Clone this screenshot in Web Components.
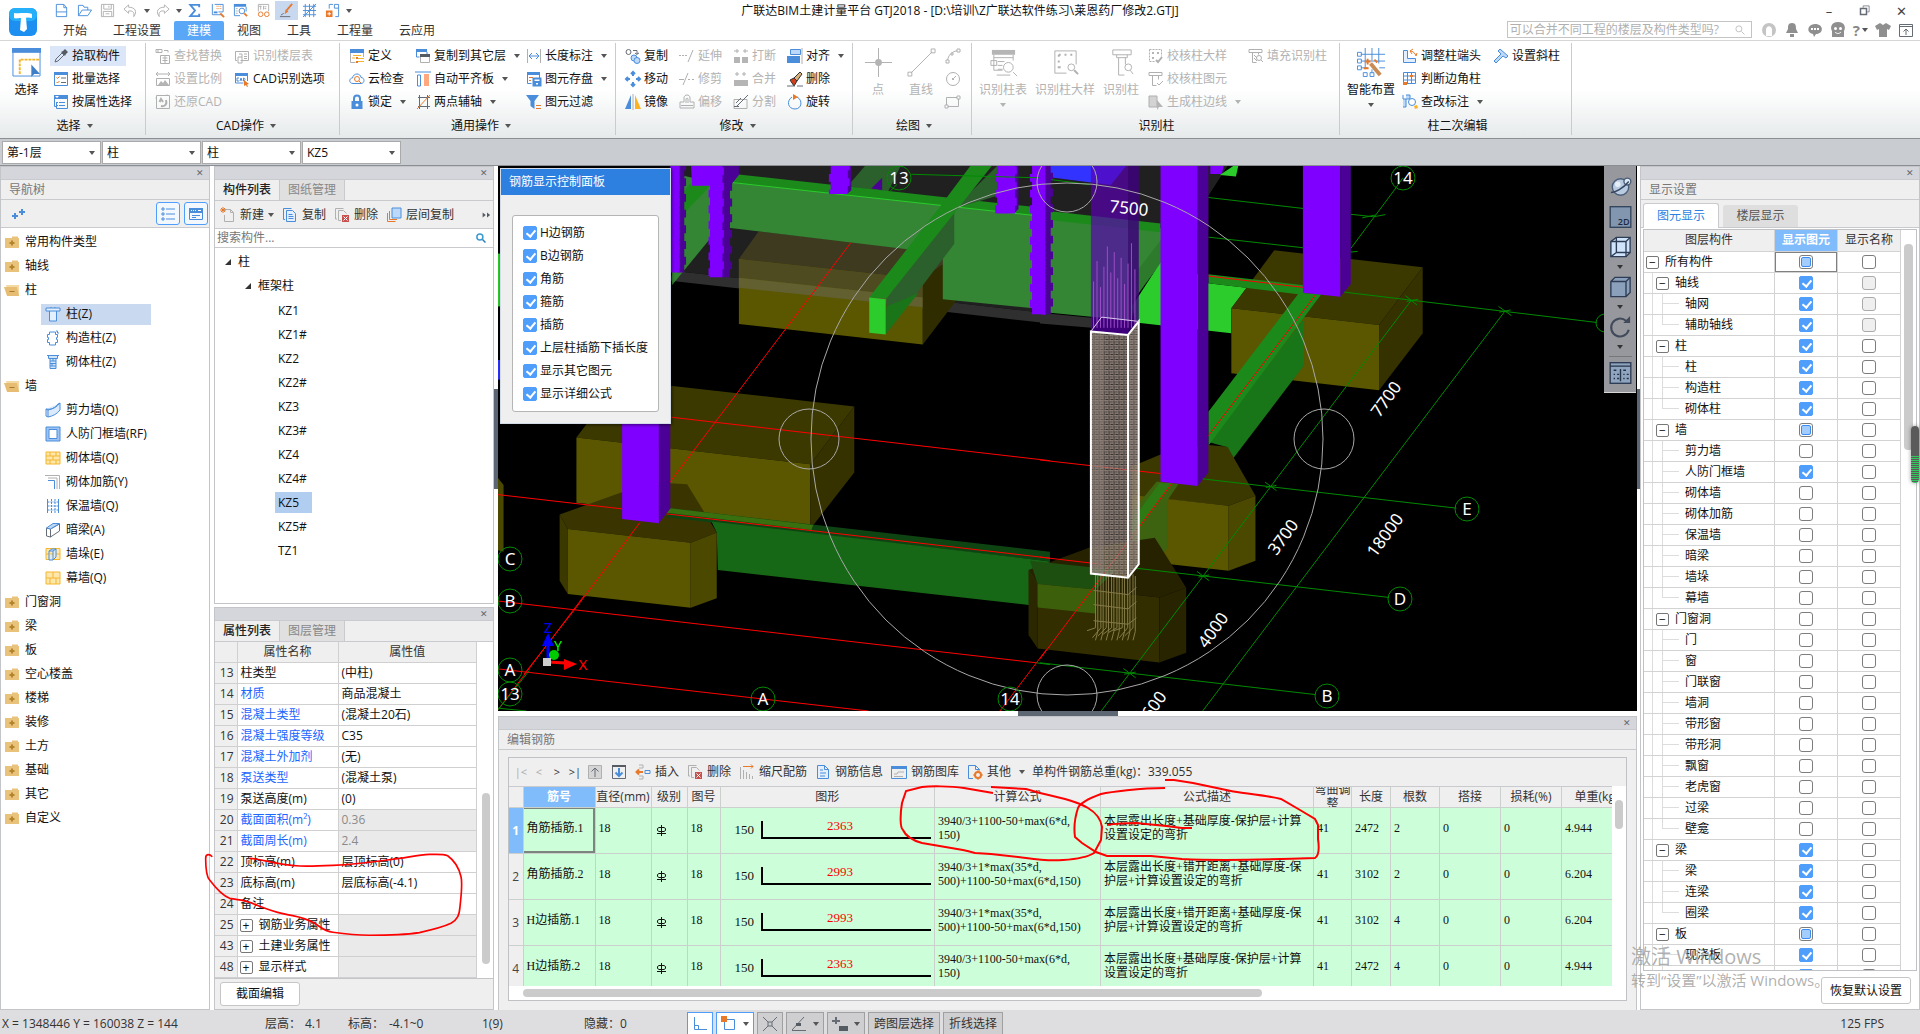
<!DOCTYPE html>
<html lang="zh-CN">
<head>
<meta charset="utf-8">
<title>广联达BIM土建计量平台 GTJ2018</title>
<style>
  html,body{height:100%}
  body{margin:0;overflow:hidden;background:#fff;color:#111;font:12px/16px "Open Sans","Noto Sans CJK SC",sans-serif}
</style>
</head>
<body>
<app-shell></app-shell>

<script>
const BASE = `
  *{box-sizing:border-box}
  button,input,select{font:inherit;color:inherit;margin:0}
  button{background:none;border:0;padding:0;white-space:nowrap}
  a{color:inherit;text-decoration:none}
  table{border-collapse:collapse;table-layout:fixed}
  th{font-weight:400}
  .caret{display:inline-block;border:3px solid transparent;border-top:4px solid #555;border-bottom:0;flex:none}
  .pm{display:inline-grid;place-items:center;width:13px;height:13px;border:1px solid #777;border-radius:2px;line-height:9px;margin-right:6px;background:#fff;vertical-align:middle}
  input[type=checkbox]{appearance:none;display:block;position:relative;width:14px;height:14px;border:1px solid #7d7d7d;border-radius:3px;background:#fff}
  input[type=checkbox]:checked{background:#4f9efb;border-color:#4f9efb;border-radius:2px}
  input[type=checkbox]:checked::after{content:"";position:absolute;left:4px;top:1px;width:4px;height:7px;border:solid #fff;border-width:0 2px 2px 0;transform:rotate(40deg)}
  input[type=checkbox]:disabled{background:#efefef;border-color:#aaa}
  input[type=checkbox]:indeterminate::after{content:"";position:absolute;inset:1px;border:1px solid #3b8df0;border-radius:2px;background:#a3cdff}
`;

class BaseElement extends HTMLElement {
  connectedCallback(){
    if(this.shadowRoot) return;
    const s = this.attachShadow({mode:'open'});
    s.innerHTML = '<style>' + BASE + this.css() + '</style>' + this.render();
    this.ready(s);
  }
  css(){ return ''; }
  render(){ return '<slot></slot>'; }
  ready(){}
}

// ---- Icons ----
// classes: b/o/g/k/y = blue/orange/grey/dark/yellow stroke, f* = filled
const ICONS = {
  file:'<path class="b" d="M2.5 1.5h8l3 3.5v9.5h-11zM10.5 1.5v3.5h3M2.5 9.5h11"/>',
  open:'<path class="b" d="M1.5 13.5v-11h5l1 2h4v3M1.5 13.5l4-6h10l-4 6z"/>',
  save:'<path class="g" d="M1.5 1.5h13v13h-13zM4 1.5v5h8v-5M3.5 14v-5h9v5M6 11.5h4M9.5 3v2"/>',
  undo:'<path class="g" d="M6 2L1 6.5 6 11V8.5c4-.5 6.5 1 5.5 6C15.5 9 13 4.5 6 4.5z"/>',
  redo:'<path class="g" d="M10 2l5 4.5-5 4.5V8.5c-4-.5-6.5 1-5.5 6C.5 9 3 4.5 10 4.5z"/>',
  sum:'<path class="b w2" d="M13 4.5V2H3.5l5 6-5 6H13v-2.500"/>',
  calcview:'<path class="b" d="M2.5 1v11.5h10M5 1.5h9v8H9"/><path class="o" d="M7 3.5h1m1 0h1m1 0h1M7 6h1m1 0h1m1 0h1"/><path class="fb" d="M4 9h4v2H4z"/><path class="o w2" d="M11 11l4 4"/>',
  calcfind:'<path class="fb" d="M1 1h13v3H1z"/><path class="b" d="M1.5 1.5v12h6M14 4v5"/><circle class="b" cx="9.5" cy="8.5" r="3"/><path class="o w2" d="M12 11l3 3"/><path class="g" d="M3 6h2M3 8.5h2M3 11h2"/>',
  glasses:'<path class="g" d="M2.5 9V1.5h11V9M5 3v4M8 3v4M11 4H9m0 2h2M3 3.5h3"/><circle class="o" cx="5" cy="12" r="2.5"/><circle class="o" cx="11.5" cy="12" r="2.5"/>',
  pen:'<path class="o w2" d="M14 1L8 8"/><path class="fo" d="M6 12l1-5 3 2z"/><path class="k" d="M1 14.5h11M2 13l3-2"/>',
  grid:'<path class="b" d="M1 3.5h14M1 8h14M1 12.5h14M3.5 1v14M8 1v14M12.5 1v14M1 15L15 1"/>',
  addpage:'<path class="b" d="M4.5 6V1.5h4M10 1.5h4.5v13H11M10 1.5v4h4"/><path class="fo" d="M1 8h7v7H1z"/><path stroke="#fff" d="M4.5 9.5v4M2.5 11.5h4"/>',
  dropper:'<path class="k" d="M2 14l1-3 6-6 2 2-6 6z"/><path class="fk" d="M8 4l2-1 2-2 3 3-2 2-1 2z"/>',
  listsel:'<path class="fb" d="M1 1h14v3H1z"/><path class="b" d="M1.5 1.5h13v13h-13z"/><path class="o" d="M3.5 6.5l1 1 2-2M3.5 11l1 1 2-2"/><path class="k" d="M8 7h5M8 11.5h5"/>',
  propsel:'<path class="fb" d="M1 1h14v4H1z"/><path class="b" d="M1.5 1.5v11h2M14.5 5v9.5h-11V8"/><path class="b" d="M6 8.5h6M6 11.5h6M4 8.5h1M4 11.5h1"/><path fill="#fff" d="M2 2h4L4 4z"/>',
  replace:'<path class="g" d="M1 1.5h6v3H1zM3 1.5v3M9 2.5h4v2M5.5 7.5h9v8h-9zM7.5 10h5M7.5 12.5h5M10 7.5v8"/>',
  floors:'<path class="g" d="M3 12.5H1.5v-9h13v9h-8"/><path class="g" d="M5 6h3v9H4V9h4M10 6h3M10 8.5h3M10 10.5h3"/>',
  scale:'<path class="g" d="M1 3h14M3 1L1 3l2 2M13 1l2 2-2 2M1.5 7.5h13v7h-13z"/><path class="fg" d="M3 14l3-4 2 2 2-3 4 5z"/>',
  cad:'<path class="fb" d="M1 2h13v3H1z"/><path class="b" d="M1.5 2.5v9.5h8M13.5 5v5"/><path class="b" d="M5 7H3v3h2M6 10l1-3 1 3M9.5 7v3c2 0 2-3 0-3"/><path class="fo" d="M10 9l5 4-2 .5 1 2-1 .5-1-2-2 1z"/>',
  restore:'<path class="g" d="M1.5 1.5h13v13h-13zM1.5 4h-1M12 1.5v-1"/><path class="g w2" d="M6 12c5 1 6-3 5-6M4.5 8l1.5-3 2 3"/>',
  define:'<path class="fb" d="M1 1h14v4H1z"/><path class="g" d="M1.5 5v9.5h5M14.5 5v4"/><path class="y" d="M4 7.5h8M3 10h3M8 10.5h7M8 13.5h7"/><path class="fo" d="M7 9h2v2H7zM7 13h2v2H7z"/>',
  cloud:'<path class="b" d="M4 12.5C-.5 12.5 0 7 3.5 7 4.5 1.5 11.5 2 12 6.5c4 0 4 6 0 6z"/><circle class="o" cx="8" cy="8" r="2.5"/><path class="o" d="M10 10l3 3"/>',
  lock:'<path class="b w2" d="M5 7V4.5c0-4 6-4 6 0V7"/><path class="fb" d="M2.5 7h11v8h-11z"/><circle cx="8" cy="11" r="1.5" fill="#fff"/>',
  copyfloor:'<path class="fb" d="M1 1h11v3H1z"/><path class="b" d="M1.5 1v8h3M12 4v2"/><path class="g" d="M5.5 7.5h9v7h-9z"/><path class="fk" d="M5 6h10v3H5z"/>',
  flatten:'<path class="b" d="M0 1h16M2.5 4v11h3V4z"/><path fill="#ffa77e" d="M9 3h5v12H9z"/>',
  twopoint:'<path class="k" d="M3 3.5h12M3 12.5h12M4.5 1v14M12.5 1v14"/><path class="o" d="M2 15L15 1"/>',
  dim:'<path class="g" d="M1.5 1v14M14.5 1v14"/><path class="b" d="M3 8h10M6 5L3 8l3 3M10 5l3 3-3 3"/>',
  saveel:'<path class="fb" d="M1 1h13v3H1z"/><path class="b" d="M1.5 1.5v11h4M13.5 3v4"/><path class="o" d="M3 6.5h4M3 9.5h2"/><path class="b w2" d="M7.5 7.5h7v7h-7zM9 14v-3h4v3"/>',
  filter:'<path class="fb" d="M0 1h13L8.5 7v8l-4-3V7z"/><path class="o" d="M10 11.5h5M10 14.5h5"/>',
  copy2:'<circle class="k" cx="3.5" cy="4" r="2.5"/><path class="k" d="M8 2.5h4v4l-2-1.5M12 6l2-1"/><circle class="b" cx="9" cy="10" r="3" fill="#bcd9fa"/><circle class="b" cx="12" cy="12.5" r="3" fill="#bcd9fa"/>',
  move:'<path class="b w2" d="M8 1v4M8 11v4M1 8h4M11 8h4M6 3l2-2 2 2M6 13l2 2 2-2M3 6L1 8l2 2M13 6l2 2-2 2"/>',
  mirror:'<path class="fb" d="M6 1v14H0z"/><path class="fy" d="M10 1v14h6z"/><path class="g" d="M8 0v16"/>',
  extend:'<path class="g" d="M0 7.5h8" stroke-dasharray="2 1"/><path class="g" d="M9 14l5-12"/>',
  trim:'<path class="g" d="M0 8.5h5M4 14L9 2M9 8.5h2m2 0h2"/>',
  offset:'<path class="g" d="M5 8V4c0-4 6-4 6 0v4h4v6H1V8zM7 9V5c0-1 2-1 2 0v4M2 11.5h12"/>',
  brk:'<path class="fg" d="M1 9h6v6H1zM9 9h6v6H9z"/><path class="g" d="M1 3h5M4 1v4M10 3h5M12 1v4"/>',
  merge:'<path class="fg" d="M1 9h14v6H1z"/><path class="g" d="M2 3h4M4 1v4M9 3h4M11 1v4"/>',
  split:'<path class="g" d="M1 5.5h13v9H1z"/><path class="k" d="M3 13L13 3l2-2M1 12.5h5M3 9l5-5"/>',
  align:'<path class="fb" d="M0 8h13v7H0z"/><path class="b" d="M3.5 1.5h10v5h-10z" fill="#bcd9fa"/><path class="g" d="M15 0v16"/>',
  erase:'<path d="M7 7l6-6 2 2-5 7z" fill="#d8b17a" stroke="#333"/><path d="M3 9l4-2 3 3-3 5z" fill="#d23e1a" stroke="#333"/><path class="k" d="M0 15h8M10 15h6"/>',
  rotate:'<path class="b" d="M5 3c-6 4-4 12 3 12s8-9 2-12"/><path class="fo" d="M6 0l5 3-5 3z"/>',
  arc:'<path class="g" d="M2.5 13C3 7 7 3.5 13 2.5"/><path class="g" d="M1 12h3v3H1zM6 5h2v2H6zM12 1h3v3h-3z" fill="#fff"/>',
  circle:'<circle class="g" cx="8" cy="8" r="6.5"/><path class="g" d="M8 8l3-3"/><path class="fg" d="M7 7h2v2H7z"/>',
  rect:'<path class="g" d="M1.5 3.5h12v9h-12z"/><path class="g" d="M0 11h3v3H0zM12 2h3v3h-3z" fill="#fff"/>',
  chkbig:'<path class="g" d="M1.5 1.5h12v7M1.5 1.5v12h6" stroke-dasharray="2 1"/><path class="g w2" d="M8 12l2 2 4-5"/><path class="fg" d="M4 4h2v2H4zM9 4h2v2H9zM4 9h2v2H4z"/>',
  chkcol:'<path class="g" d="M1 1.5h13v3H1zM4.5 4.5v10h4M10.5 4.5v4M9 12l2 2 4-4"/>',
  genline:'<path d="M1 2h8v11H1z" fill="#d3d3d3" class="g"/><path class="fg" d="M9 6l6 7h-4l-2 3z"/>',
  fillcol:'<path class="g" d="M1 1.5h13v3H1zM4.5 4.5v10h4M10.5 4.5v2M6 7l3 3M6 10l3 3"/><circle class="g" cx="11" cy="10" r="2.5"/><path class="g" d="M13 12l2 2"/>',
  endcap:'<path class="b" d="M1.5 2.5h4v8h8v4h-12z" fill="#e3effd"/><path class="o" d="M8 3c3 0 5 2 6 5M8 3l3-2M8 3l2 3M14 8l1-3"/>',
  corner:'<path class="b" d="M1.5 1.5h12v11h-12zM5.5 1.5v11M9.5 1.5v11M1.5 5h12M1.5 9h12"/><path class="fo" d="M8 4h3v2H8zM1 11h4v3H1z"/>',
  checkmark:'<path class="b" d="M1 1v4h3v8H1M4 5h4V1H4" fill="#bcd9fa"/><circle class="b" cx="10" cy="8" r="3.5" fill="#fff"/><path class="fy" d="M12 12l3-1 1 3-3 1z"/>',
  slant:'<path class="b" d="M7 1l8 7-2 2-3-2-7 7-2-2 7-7-3-3z" fill="#bcd9fa"/>',
  colZ:'<path class="b" d="M1 2h14v3H1zM4.5 5v10h7V5M6 2v-1M10 2V1" fill="#e3effd"/>',
  gz:'<path class="b" d="M4.5 4.5V2h6v2.5h2v3h-1v2h1v3h-2V15h-6v-2.500h-2v-3h1v-2h-1v-3z"/><path class="b" d="M11 1h1.500v2H14"/>',
  qz:'<path class="b" d="M2 1.5h12M3.5 1.5v3h9v-3M5 4.5v10h6v-10M5 7h6M5 9.5h6M5 12h6M8 4.5V7M7 9.5V12" fill="#cfe3fa"/>',
  jlq:'<path class="b" d="M1 7c5 1 9-1 12-5l2-1v7c-3 4-7 6-12 7l-2-1zM1 7l2 1c5-1 9-3 12-7M3 8v7" fill="#dcebfc"/>',
  rf:'<path class="b" d="M1 1h14v14H1z" fill="#9cc3f3"/><path class="b" d="M4 3.5h8v9H4z" fill="#fff"/>',
  brick:'<path class="y" d="M1 2h14v12H1zM1 6h14M1 10h14M5 2v4M11 2v4M8 6v4M5 10v4M11 10v4" fill="#fde7ac"/>',
  rebar:'<path class="g" d="M0 1.5h14.5V15M3 4h9v11"/><path class="b" d="M3 6.5h6.5V15"/>',
  insul:'<path class="b" d="M2.5 1v14M13.5 1v14"/><path class="b" d="M2.5 4h11M2.5 8h11M2.5 12h11M6.5 1v14M10 1v14" stroke-dasharray="2 1"/>',
  beamA:'<path class="k" d="M1.5 6l4 1v8l-4-1zM5.5 7l9-5v7l-9 6"/><path class="b" d="M1.5 6L8 1.5h6.5L5.5 7z" fill="#bcd9fa"/>',
  pier:'<path class="y" d="M1 2.5h14v11H1zM1 8h14" fill="#fde7ac"/><path class="b" d="M4 5l3-2h4v8l-3 3H4zM8 14V5H4M8 5l3-2" fill="#dcebfc"/>',
  curtain:'<path class="y" d="M1 2h14v12H1zM1 8h14M8 2v6M5 8v6M11 8v6" fill="#fde7ac"/>',
  folder:'<path fill="#e9c37c" d="M1 4h7V2.500h6V4h1v10H1z"/><path stroke="#b5852e" stroke-width="2" d="M8 6.5v5M5.5 9h5"/>',
  folderopen:'<path fill="#f4d9a4" d="M2 3h13v11H5z"/><path fill="#e6bd72" d="M0 5h13l2 9H3z"/><path stroke="#a87a2c" d="M5.5 9.5h5"/>',
  pluses:'<path class="b w2" d="M5 7v6M2 10h6M12 3v6M9 6h6"/>',
  bullets:'<path class="b" d="M2 2h2v2H2zM2 7h2v2H2zM2 12h2v2H2zM6 3h9M6 8h9M6 13h9"/>',
  window:'<path class="fb" d="M1 2h14v5H1z"/><path class="b" d="M1.5 2.5h13v11h-13zM4 9.5h8M4 11.5h4"/><path stroke="#fff" d="M3 4.5h1m1 0h1m1 0h1m2 0h3"/>',
  create:'<path class="g" d="M4.5 5V2.5h6l3 3v9h-9V8M10.5 2.5v3h3"/><path class="o" d="M1 1l4 4M5 1L1 5M3 0v6M0 3h6"/>',
  copydoc:'<path class="b" d="M3 12.5H1.5v-11h8"/><path class="b" d="M4.5 3.5h6l3 3v8h-9zM6.5 7.5h4M6.5 9.5h5M6.5 11.5h5" fill="#e3effd"/>',
  deldoc:'<path class="g" d="M3 12H1.5V1.5h8M7 13.5H4.5v-10h5l3 3"/><path fill="#c8504e" d="M8 8h7v7H8z"/><path stroke="#fff" d="M9.5 9.5l4 4m0-4l-4 4"/>',
  between:'<path class="o" d="M1.5 6v8.5h8M3.5 4v8.5H11"/><path class="b" d="M6 1h9v10H6z" fill="#bcd9fa"/>',
  more:'<path class="fk" d="M1 4l5 4-5 4zM8 4l5 4-5 4z"/>',
  search:'<circle class="g" cx="6.5" cy="6.5" r="4"/><path class="g" d="M10 10l4 4"/>',
  searchb:'<circle cx="6.5" cy="6.5" r="4" fill="none" stroke="#3a9bd4" stroke-width="2"/><path stroke="#2c7fb0" stroke-width="2" d="M10 10l4 4"/>',
  up:'<path class="g" d="M1.5 1.5h13v13h-13z" fill="#d5d5d5"/><path class="k" d="M8 13V4M4.5 7.5L8 4l3.5 3.5"/>',
  down:'<path class="k" d="M1.5 1.5h13v13h-13z"/><path class="fk" d="M1 1h14v2H1z"/><path class="b w2" d="M8 4v8M4.5 8.5L8 12l3.5-3.5"/>',
  insert:'<path class="g" d="M4 1h4v3H4M4 12h4v3H4"/><path class="o w2" d="M8 8H2M4 5.5L1.5 8 4 10.5"/><path class="b" d="M10 6.5h5v3h-5z"/>',
  taper:'<path class="g" d="M1.5 3v12M4.5 6v9M7.5 8v7M10.5 10v5M13.5 12v3"/><path class="o" d="M4 2.5h10M12 .5l2 2-2 2"/>',
  info:'<path class="b" d="M2.5 1.5h7l4 4v9h-11zM9.5 1.5v4h4M5 6h3M5 9h6M5 12h5" fill="#e3effd"/>',
  lib:'<path class="fb" d="M0 2h16v3H0z"/><path class="b" d="M.5 2.5h15v12H.5z"/><path class="g" d="M3 10h3l1-2h6M3 12.5h9"/>',
  other:'<path class="b" d="M6 14.5H1.5v-13h7l4 4v1M8.5 1.5v4h4"/><circle cx="11" cy="11" r="3" fill="none" stroke="#e8782a" stroke-width="2"/><path class="o" d="M11 6v2M11 14v2M6 11h2M14 11h2"/>',
  user:'<circle cx="8" cy="8" r="7" fill="#c4c4c4"/><path d="M5 14V8c0-5 6-5 6 0v6" fill="#fff"/>',
  bell:'<path class="fd" d="M8 1c4 0 4 3 4 6l2 4H2l2-4c0-3 0-6 4-6zM6 12h4v3H6z"/>',
  chat:'<path class="fd" d="M8 2c9 0 9 10 1 10l-2 3-1-3C-1 11 0 2 8 2z"/><path stroke="#fff" stroke-width="2" d="M4 7h2m1 0h2m1 0h2"/>',
  bot:'<path class="fd" d="M8 0c7 0 8 6 6 9v6H2V9C0 6 1 0 8 0z"/><circle cx="5.5" cy="6.5" r="1.5" fill="#fff"/><circle cx="10.5" cy="6.5" r="1.5" fill="#fff"/><path stroke="#fff" fill="none" d="M5 10c2 2 4 2 6 0"/>',
  shirt:'<path class="fd" d="M5 1l3 2 3-2 5 3-2 4-2-1v8H4V7L2 8 0 4z"/>',
  pin:'<path class="k" d="M1.5 2.5h13v12h-13zM1.5 4.5h13M8 13V7M5.5 9.5L8 7l2.5 2.5"/>',
  restorewin:'<path class="k w2" d="M2 6h8v8H2z"/><path class="k" d="M5.5 5V2.5h8v8H11"/>',
  // 30 x 30
  select30:'<path class="b" d="M1 3h28v26H1z"/><path class="fb" d="M0 0h30v5H0z"/><path d="M8 27V12h20" fill="none" stroke="#f4b42a" stroke-width="2" stroke-dasharray="3 1"/><path d="M20 17l9 10h-6l-3 3z" fill="#3f7fc8"/>',
  point30:'<path class="g" d="M15 0v12M15 18v12M1 15h11M18 15h11"/><circle cx="15" cy="15" r="3.5" fill="#b3b3b3"/>',
  line30:'<path class="g" d="M4 26L26 4M1 25h4v4H1zM25 1h4v4h-4z"/>',
  coltable30:'<path class="fg" d="M3 2h24v5H3z"/><path class="g" d="M5 10h20M5 7v16h9M25 7v6M2 13h6v5H2zM9 14h7M9 18h5M9 22h5M8 28h14M25 25l4 4"/><circle cx="20" cy="20" r="5" class="g" fill="#fff"/>',
  colbig30:'<path class="g" d="M16 26H4V3h22v14"/><path class="g w2" stroke-dasharray="2 4" d="M8 7h15M8 20h6M8 7v14"/><circle class="g" cx="21" cy="20" r="3.5"/><path class="g w2" d="M24 23l4 4"/>',
  col30:'<path class="g" d="M6 2h19v5H6zM10 7v3h11V7M12 10v18h6M19 10v7"/><circle class="g" cx="22" cy="20" r="3.5"/><path class="g" d="M24 23l3 4"/>',
  smart30:'<path class="b" d="M4 6.5h25M4 13.5h25M4 20.5h7M23 20.5h6M8.5 0v22M15.5 0v13M15.5 22v4M22.5 0v16"/><path class="b" d="M.5 4.5h4v4h-4zM.5 11.5h4v4h-4zM.5 18.5h4v4h-4zM6.5 25.5h4v4h-4zM13.5 25.5h4v4h-4z"/><path class="o" stroke-width="2" d="M8 14h6M11 11v6M7 21h5M18 12l3 3"/><path stroke="#c98a54" stroke-width="4" d="M14 16l10 12"/>',
  logo:'<rect x="1" y="1" width="28" height="28" rx="6" fill="#1c8ff0"/><rect x="1" y="1" width="28" height="13" rx="6" fill="#26b0fa"/><path d="M6 6c3 1 14-1 18 1v4c-2 0-4-1-6 0l1 11-3 3-4-2 1-12c-3 0-5 1-7 0z" fill="#fff"/>',
  // view toolbar
  orbit:'<circle cx="8" cy="8" r="6" fill="#b9cbe0" stroke="#4a5d77"/><circle cx="13" cy="4" r="2.5" fill="#dfe9f4" stroke="#4a5d77"/><path d="M1 12c3 0 9-3 13-8" stroke="#34455e" fill="none"/><circle cx="6" cy="6" r="2" fill="#e6eff8"/>',
  v2d:'<rect x=".5" y=".5" width="15" height="15" fill="#8296b0" stroke="#34455e"/>',
  cubewire:'<path d="M1 4l4-3h10v11l-3 3H1z" fill="#cfe4fb" stroke="#2e3d55"/><path d="M1 4h11v11M12 4l3-3M5 1v11h10M5 12l-4 3" fill="none" stroke="#2e3d55"/>',
  cubesolid:'<path d="M1 4l3-3h11v11l-3 3H1zM1 4h11v11M12 4l3-3" fill="#8ba0bb" stroke="#2e3d55"/>',
  spin:'<path d="M14 10A6.5 6.5 0 1 1 12 3.5" fill="none" stroke="#414a5a" stroke-width="1.5"/><path d="M10 5h5V0z" fill="#414a5a"/>',
  sheet:'<rect x=".5" y=".5" width="15" height="15" fill="#8fa5bf" stroke="#2e3d55"/><path d="M.5 3h15M8 5v9M3 6h2M3 9h1M3 12h1M5.5 9H7M5.5 12H7M10 6h2M10 9h1M10 12h1M12.5 9H14M12.5 12H14" stroke="#26344a" fill="none"/>',
  // status bar
  ortho:'<path class="b" d="M2.5 1v12.5H15M2.5 9.5h4v4"/>',
  snap:'<path class="b" d="M3.5 3.5h10v10h-10z"/><path class="fo" d="M0 0h6v6H0z"/>',
  cross:'<path class="k" d="M1 1l14 14M15 1L1 15"/><path class="k" d="M6 6h4v4H6z" fill="#ccc"/>',
  angle:'<path class="k" d="M1 14.5h14M1 14L13 1"/><path class="fk" d="M5 7h5v3H5z"/>',
  plusbox:'<path class="k w2" d="M4 1v7M0 5h8"/><path class="fk" d="M7 10h9v5H7z"/>'
};

class UiIcon extends BaseElement {
  css(){ return `
    :host{display:inline-block;flex:none;width:16px;height:16px}
    svg{display:block;width:100%;height:100%;overflow:visible;fill:none}
    .b{stroke:#4a8edb}.o{stroke:#e8782a}.g{stroke:#b0b0b0}.k{stroke:#666c75}.y{stroke:#f5b52c}
    .fb{fill:#4a8edb}.fo{fill:#e8782a}.fg{fill:#b5b5b5}.fk{fill:#555b63}.fy{fill:#fbb322}.fd{fill:#8f8f8f}
    .w2{stroke-width:2}`; }
  render(){
    const n = this.getAttribute('name');
    const v = /30$|logo/.test(n) ? 30 : 16;
    return `<svg viewBox="0 0 ${v} ${v}" aria-hidden="true">${ICONS[n]||''}</svg>`;
  }
}

// ---- Title bar ----
class AppTitlebar extends BaseElement {
  css(){ return `
    :host{display:flex;background:#fff;border-bottom:1px solid #d4d6d8;height:41px}
    .left,.right{flex:1 1 0;min-width:0;display:flex}
    .logo{width:50px;padding:7px 0 0 8px}
    .logo ui-icon{width:30px;height:30px}
    .col{display:flex;flex-direction:column}
    .qat{height:21px;display:flex;align-items:center}
    .qat button{width:23px;height:19px;display:grid;place-items:center}
    .qat button.arrow{width:9px}
    .qat button.on{background:#c7d8ef}
    .qat ui-icon{width:15px;height:15px}
    nav{display:flex}
    nav a{padding:0 13px;height:19px;line-height:19px;color:#333}
    nav a.on{background:#5aa7f8;color:#fff;border-radius:2px 2px 0 0}
    h1{font:inherit;margin:3px 0 0;white-space:nowrap}
    .right{flex-direction:column;align-items:flex-end}
    .win{display:flex;align-items:center;height:21px;padding-right:7px;color:#444}
    .win button{width:24px;margin-left:12px;font-size:13px;text-align:center}
    .win ui-icon{width:12px;height:12px}
    .tools{display:flex;align-items:center;gap:7px;padding-right:6px}
    .tools button{height:16px;display:flex;align-items:center;gap:2px;font-weight:700;font-size:15px;color:#888}
    .find{display:flex;align-items:center;width:245px;height:17px;border:1px solid #c4c4c4;margin-right:2px;padding:0 5px 0 2px}
    .find input{flex:1;min-width:0;border:0;outline:0;padding:0;height:15px;background:none}
    .find input::placeholder{color:#b0b0b0}
    .find ui-icon{width:12px;height:12px}`; }
  render(){
    const q = (n,l,c)=>`<button aria-label="${l}" class="${c||''}"><ui-icon name="${n}"></ui-icon></button>`;
    const a = '<button class="arrow" aria-label="更多"><i class="caret"></i></button>';
    return `
      <div class="left">
        <div class="logo"><ui-icon name="logo"></ui-icon></div>
        <div class="col">
          <div class="qat">${q('file','新建')}${q('open','打开')}${q('save','保存')}${q('undo','撤销')}${a}${q('redo','恢复')}${a}${q('sum','汇总')}${q('calcview','查看工程量')}${q('calcfind','查看计算式')}${q('glasses','查看钢筋')}${q('pen','编辑','on')}${q('grid','轴网')}${q('addpage','添加')}${a}</div>
          <nav><a href="#">开始</a><a href="#">工程设置</a><a href="#" class="on">建模</a><a href="#">视图</a><a href="#">工具</a><a href="#">工程量</a><a href="#">云应用</a></nav>
        </div>
      </div>
      <h1>广联达BIM土建计量平台 GTJ2018 - [D:\\培训\\Z广联达软件练习\\莱恩药厂修改2.GTJ]</h1>
      <div class="right">
        <div class="win"><button aria-label="最小化">–</button><button aria-label="还原"><ui-icon name="restorewin"></ui-icon></button><button aria-label="关闭">✕</button></div>
        <div class="tools">
          <label class="find"><input aria-label="搜索帮助" placeholder="可以合并不同工程的楼层及构件类型吗?"><ui-icon name="search"></ui-icon></label>
          ${['user','bell','chat','bot'].map(n=>q(n,n)).join('')}
          <button aria-label="帮助">?<i class="caret"></i></button>
          ${q('shirt','皮肤')}${q('pin','收起')}
        </div>
      </div>`;
  }
}

// ---- Ribbon ----
class RibbonGroup extends BaseElement {
  css(){ return `
    :host{display:flex;flex-direction:column;position:relative;padding-top:3px;padding-left:var(--pad,6px)}
    :host::after{content:"";position:absolute;right:0;top:2px;bottom:3px;width:1px;background:#c9ccce}
    .body{display:grid;grid-auto-flow:column;grid-template-rows:repeat(3,23px);grid-template-columns:var(--cols);align-items:center}
    ::slotted([big]){grid-row:span 3;align-self:start}
    .label{height:26px;display:flex;align-items:center;justify-content:center;gap:6px}`; }
  render(){
    return `<div class="body"><slot></slot></div>
      <div class="label">${this.getAttribute('label')}${this.hasAttribute('menu')?'<i class="caret"></i>':''}</div>`;
  }
}

class RibbonButton extends BaseElement {
  css(){ return `
    :host{display:block;min-width:0}
    button{display:flex;align-items:center;gap:3px;height:20px;padding:0 6px 0 3px}
    .caret{margin-left:5px}
    :host([on]) button{background:#dbe7f8}
    :host([off]) button{color:#b3b3b3}
    :host([off]) .caret{border-top-color:#b3b3b3}
    :host([big]) button{flex-direction:column;gap:5px;width:100%;height:69px;padding:4px 0 0}
    :host([big]) ui-icon{width:29px;height:29px}
    :host([big]) .caret{margin:0}`; }
  render(){
    return `<button${this.hasAttribute('off')?' disabled':''} aria-label="${this.textContent||this.getAttribute('icon')}"><ui-icon name="${this.getAttribute('icon')}"></ui-icon><slot></slot>${this.hasAttribute('menu')?'<i class="caret"></i>':''}</button>`;
  }
}

class RibbonBar extends BaseElement {
  css(){ return `
    :host{display:flex;height:97px;background:linear-gradient(#fff 50%,#e6eaeb)}`; }
  render(){
    const r = (i,t,x)=>`<ribbon-button icon="${i}" ${x||''}>${t}</ribbon-button>`;
    return `
      <ribbon-group label="选择" menu style="--pad:3px;--cols:47px 96px">
        ${r('select30','选择','big')}${r('dropper','拾取构件','on')}${r('listsel','批量选择')}${r('propsel','按属性选择')}
      </ribbon-group>
      <ribbon-group label="CAD操作" menu style="--cols:79px 109px">
        ${r('replace','查找替换','off')}${r('scale','设置比例','off')}${r('restore','还原CAD','off')}
        ${r('floors','识别楼层表','off')}${r('cad','CAD识别选项')}
      </ribbon-group>
      <ribbon-group label="通用操作" menu style="--cols:66px 111px 93px">
        ${r('define','定义')}${r('cloud','云检查')}${r('lock','锁定','menu')}
        ${r('copyfloor','复制到其它层','menu')}${r('flatten','自动平齐板','menu')}${r('twopoint','两点辅轴','menu')}
        ${r('dim','长度标注','menu')}${r('saveel','图元存盘','menu')}${r('filter','图元过滤')}
      </ribbon-group>
      <ribbon-group label="修改" menu style="--cols:54px 54px 54px 69px">
        ${r('copy2','复制')}${r('move','移动')}${r('mirror','镜像')}
        ${r('extend','延伸','off')}${r('trim','修剪','off')}${r('offset','偏移','off')}
        ${r('brk','打断','off')}${r('merge','合并','off')}${r('split','分割','off')}
        ${r('align','对齐','menu')}${r('erase','删除')}${r('rotate','旋转')}
      </ribbon-group>
      <ribbon-group label="绘图" menu style="--pad:3px;--cols:44px 42px 30px">
        ${r('point30','点','big off')}${r('line30','直线','big off')}
        ${r('arc','','off')}${r('circle','','off')}${r('rect','','off')}
      </ribbon-group>
      <ribbon-group label="识别柱" style="--pad:1px;--cols:60px 64px 48px 100px 95px">
        ${r('coltable30','识别柱表','big off menu')}${r('colbig30','识别柱大样','big off')}${r('col30','识别柱','big off')}
        ${r('chkbig','校核柱大样','off')}${r('chkcol','校核柱图元','off')}${r('genline','生成柱边线','off menu')}
        ${r('fillcol','填充识别柱','off')}
      </ribbon-group>
      <ribbon-group label="柱二次编辑" style="--pad:3px;--cols:56px 91px 82px">
        ${r('smart30','智能布置','big menu')}
        ${r('endcap','调整柱端头')}${r('corner','判断边角柱')}${r('checkmark','查改标注','menu')}
        ${r('slant','设置斜柱')}
      </ribbon-group>`;
  }
}

class ContextBar extends BaseElement {
  css(){ return `
    :host{display:flex;gap:1px;height:28px;padding:2px;background:#c9cdd1;border-top:1px solid #8b8f94;border-bottom:1px solid #8b8f94}
    label{position:relative;width:99px;height:23px}
    select{appearance:none;width:100%;height:100%;border:1px solid #aaa;background:#fff;padding:0 4px;outline:0}
    .caret{position:absolute;right:6px;top:10px}`; }
  render(){
    return [['楼层','第-1层'],['构件大类','柱'],['构件类型','柱'],['构件','KZ5']].map(c=>
      `<label><select aria-label="${c[0]}"><option>${c[1]}</option></select><i class="caret"></i></label>`).join('');
  }
}

// ---- Dock panel frame: grip strip with a close button, optional heading or tabs ----
class DockPanel extends BaseElement {
  css(){ return `
    :host{display:flex;flex-direction:column;min-height:0;border:1px solid #c3c5c9;background:#fff}
    .strip{height:12px;flex:none;background:#d5d6dc;display:flex;justify-content:flex-end;padding-right:5px}
    .strip button{line-height:10px;font-size:9px;color:#666;width:9px}
    .head{height:21px;flex:none;background:#efefef;border:solid #c9cacd;border-width:1px 0;padding:0 8px;line-height:19px;color:#777}
    .tabs{height:22px;flex:none;background:#efefef;border:solid #c9cacd;border-width:1px 0;display:flex}
    .tabs button{width:65px;border-right:1px solid #c9cacd;color:#888;background:#e0e0e0}
    .tabs button:first-child{background:#efefef;color:#222;font-weight:500}`; }
  render(){
    const h = this.getAttribute('heading'), t = this.getAttribute('tabs');
    return `<div class="strip"><button aria-label="关闭">✕</button></div>
      ${h?`<div class="head">${h}</div>`:''}
      ${t?`<div class="tabs" role="tablist">${t.split(',').map(x=>`<button role="tab">${x}</button>`).join('')}</div>`:''}
      <slot></slot>`;
  }
}

// ---- Navigation tree ----
class NavTree extends BaseElement {
  css(){ return `
    :host{display:flex;min-height:0}
    dock-panel{flex:1}
    .bar{display:flex;align-items:center;gap:4px;height:28px;flex:none;background:#efefef;border-bottom:1px solid #c9cacd;padding:0 1px 0 5px}
    .bar span{flex:1}
    .bar button{width:24px;height:23px;border-radius:3px;display:grid;place-items:center}
    .bar .sq{border:1px solid #4f9efb;background:#f3f8ff}
    ul{list-style:none;margin:0;padding:2px 0 0;overflow:hidden;flex:1}
    li{display:flex;align-items:center;gap:5px;height:24px;padding-left:3px}
    li.sub{padding-left:40px}
    li.sub span{display:flex;align-items:center;gap:5px;height:21px;padding:0 4px;min-width:110px}
    li.on span{background:#c9d9f0}`; }
  render(){
    const f = t=>`<li><ui-icon name="folder"></ui-icon>${t}</li>`;
    const o = t=>`<li><ui-icon name="folderopen"></ui-icon>${t}</li>`;
    const s = (i,t,c)=>`<li class="sub ${c||''}"><span><ui-icon name="${i}"></ui-icon>${t}</span></li>`;
    return `<dock-panel heading="导航树">
      <div class="bar"><button aria-label="展开"><ui-icon name="pluses"></ui-icon></button><span></span><button class="sq" aria-label="列表"><ui-icon name="bullets"></ui-icon></button><button class="sq" aria-label="图标"><ui-icon name="window"></ui-icon></button></div>
      <ul>${f('常用构件类型')}${f('轴线')}${o('柱')}${s('colZ','柱(Z)','on')}${s('gz','构造柱(Z)')}${s('qz','砌体柱(Z)')}
      ${o('墙')}${s('jlq','剪力墙(Q)')}${s('rf','人防门框墙(RF)')}${s('brick','砌体墙(Q)')}${s('rebar','砌体加筋(Y)')}${s('insul','保温墙(Q)')}${s('beamA','暗梁(A)')}${s('pier','墙垛(E)')}${s('curtain','幕墙(Q)')}
      ${['门窗洞','梁','板','空心楼盖','楼梯','装修','土方','基础','其它','自定义'].map(f).join('')}</ul>
    </dock-panel>`;
  }
}

// ---- Component list ----
class ComponentList extends BaseElement {
  css(){ return `
    :host{display:flex;min-height:0}
    dock-panel{flex:1}
    .bar{display:flex;align-items:center;gap:8px;height:28px;flex:none;background:#efefef;border-bottom:1px solid #c9cacd;padding:0 1px 0 5px;color:#333}
    .bar button{display:flex;align-items:center;gap:4px}
    .bar .last{margin-left:auto}
    .find{display:flex;align-items:center;height:19px;flex:none;border-bottom:1px solid #c9cacd;padding:0 6px 0 2px}
    .find input{flex:1;border:0;outline:0;padding:0;min-width:0}
    .find input::placeholder{color:#777}
    .find ui-icon{width:12px;height:12px}
    ul{list-style:none;margin:0;padding:2px 0 0;overflow:hidden}
    li{display:flex;align-items:center;height:24px;gap:7px;padding-left:10px}
    li.l1{padding-left:30px}
    li.l2{padding-left:60px}
    li.l2 span{padding:0 3px;height:21px;line-height:21px;min-width:37px}
    li.on span{background:#b1cdf0}
    .tri{border:solid transparent;border-width:0 0 6px 6px;border-bottom-color:#333}`; }
  render(){
    const k = ['KZ1','KZ1#','KZ2','KZ2#','KZ3','KZ3#','KZ4','KZ4#','KZ5','KZ5#','TZ1'];
    return `<dock-panel tabs="构件列表,图纸管理">
      <div class="bar"><button><ui-icon name="create"></ui-icon>新建<i class="caret"></i></button><button><ui-icon name="copydoc"></ui-icon>复制</button><button><ui-icon name="deldoc"></ui-icon>删除</button><button><ui-icon name="between"></ui-icon>层间复制</button><button class="last" aria-label="更多"><ui-icon name="more" style="width:10px"></ui-icon></button></div>
      <label class="find"><input aria-label="搜索构件" placeholder="搜索构件..."><ui-icon name="searchb"></ui-icon></label>
      <ul><li><i class="tri"></i>柱</li><li class="l1"><i class="tri"></i>框架柱</li>
      ${k.map(x=>`<li class="l2${x==='KZ5'?' on':''}"><span>${x}</span></li>`).join('')}</ul>
    </dock-panel>`;
  }
}

// ---- Property list ----
const PROPS = [
  [13,'柱类型','(中柱)'],[14,'材质','商品混凝土','b'],[15,'混凝土类型','(混凝土20石)','b'],[16,'混凝土强度等级','C35','b'],
  [17,'混凝土外加剂','(无)','b'],[18,'泵送类型','(混凝土泵)','b'],[19,'泵送高度(m)','(0)'],[20,'截面面积(m²)','0.36','b d'],
  [21,'截面周长(m)','2.4','b d'],[22,'顶标高(m)','层顶标高(0)'],[23,'底标高(m)','层底标高(-4.1)'],[24,'备注',''],
  [25,'钢筋业务属性','','x d'],[43,'土建业务属性','','x d'],[48,'显示样式','','x d']
];

class PropertyPanel extends BaseElement {
  css(){ return `
    :host{display:block;position:relative}
    .wrap{display:flex;align-items:flex-start}
    table{flex:1;min-width:0}
    td,th{height:21px;padding:0 3px;border:solid #d0d0d0;border-width:0 1px 1px 0;white-space:nowrap;overflow:hidden;line-height:18px}
    th,td:first-child{background:#efefef;color:#333}
    td:first-child{text-align:right}
    .b td:nth-child(2){color:#1a66ff}
    .d td:nth-child(3){background:#eaeaea;color:#8a8a8a}
    .x td:nth-child(2){padding-left:2px}
    .scroll{width:16px;padding-top:151px}
    .scroll i{display:block;width:8px;height:171px;margin-left:5px;border-radius:4px;background:#cbcbcb}
    .foot{background:#efefef;border-top:1px solid #c3c5c9;padding:3px 5px}
    .foot button{width:80px;height:24px;background:#fff;border:1px solid #c6c6c6;border-radius:3px}
    svg{position:absolute;left:-11px;bottom:70px;width:263px;height:90px;fill:none;stroke:#f00;stroke-width:5;pointer-events:none;z-index:2}`; }
  render(){
    return `<dock-panel tabs="属性列表,图层管理">
      <div class="wrap"><table><colgroup><col style="width:22px"><col style="width:101px"><col></colgroup>
        <tr><th></th><th>属性名称</th><th>属性值</th></tr>
        ${PROPS.map(p=>`<tr class="${p[3]||''}"><td>${p[0]}</td><td>${/x/.test(p[3]||'')?'<span class="pm">+</span>':''}${p[1]}</td><td>${p[2]}</td></tr>`).join('')}
      </table><div class="scroll"><i></i></div></div>
      <div class="foot"><button>截面编辑</button></div>
    </dock-panel>
    <svg viewBox="610 780 790 270"><path d="M638 800c-8-8-20-10-20 5 0 40 3 55 12 65 15 20 35 45 60 55 25 5 40 4 60 12 40 15 60 25 100 34 50 11 60 10 90 26 30 18 35 27 60 30 35 5 70 9 110 9 60 0 110-2 150-8 45-10 70-16 95-28 20-12 25-25 27-50 5-50 8-70 3-90-8-35-22-50-40-63-15-6-40-3-55-4-30 2-60 8-90 12-60 8-120 18-200 21-40 2-75 3-100 2-80-4-110-22-150-23"/></svg>`;
  }
}

// ---- 3D view ----
// jagged purple strip, as the starter bars leave it
function jagged(x1,x2,y1,y2,d){
  let p = `M${x1} ${y1}`, s = 0;
  for(let y=y1;y<y2;y+=22){ p += `L${x1-(s?d:0)} ${y}V${Math.min(y+22,y2)}`; s=!s; }
  let q = '';
  s = 0;
  for(let y=y2;y>y1;y-=22){ q += `L${x2+(s?d:0)} ${y}V${Math.max(y-22,y1)}`; s=!s; }
  return p + q + 'z';
}
const poly = (fill,pts)=>`<polygon fill="${fill}" points="${pts}"/>`;

class ModelView extends BaseElement {
  css(){ return `
    :host{display:block;position:relative;background:#000;min-height:0;overflow:hidden}
    svg.scene{display:block;width:100%;height:100%}
    svg.scene path,svg.scene line,svg.scene circle{vector-effect:non-scaling-stroke}
    .axis{stroke:#008a00;fill:none}
    .red{stroke:#f00;fill:none}
    .ring{stroke:#a8a8a8;fill:none}
    text{fill:#fff;text-anchor:middle;font:17px "Noto Sans","Noto Sans CJK SC",sans-serif}
    .win{position:absolute;left:2px;top:2px;width:171px;background:#efefef;border:1px solid #d2dbe6;box-shadow:1px 1px 3px #0008}
    .win h2{font:inherit;margin:0;background:#2d7fe0;color:#fff;height:26px;line-height:25px;padding-left:8px}
    .box{margin:20px 11px 11px;border:1px solid #b5b5b5;border-radius:3px;background:#fff;padding:5px 10px 6px}
    .box label{display:flex;align-items:center;gap:3px;height:23px;white-space:nowrap}
    .tools{position:absolute;right:1px;top:0;width:32px;height:227px;background:#97989e;display:flex;flex-direction:column;align-items:center;padding-top:10px;border-bottom:1px solid #d7d7d7}
    .tools button{position:relative;height:22px;margin-bottom:8px}
    .tools button.m{margin-bottom:0}
    .tools ui-icon{display:block;width:23px;height:22px}
    .tools small{position:absolute;right:2px;bottom:1px;font-size:9px;font-weight:600;line-height:10px;color:#1c2a40}
    .tools .caret{margin:7px 0 7px;border-top-color:#333}
    .tools hr{width:23px;border:0;border-top:1px solid #777;margin:0 0 5px}`; }

  left(){
    return `
      ${poly('#202020','505,17 1568,17 1568,430 512,310')}
      ${poly('#2f2f2f','512,310 1568,430 1568,458 505,338')}
      ${poly('#348634','505,100 545,45 615,60 625,210 510,350')}
      ${poly('#1b8a1b','560,66 615,74 505,190 505,140')}
      ${poly('#3d3a20','697,277 752,200 1310,262 1212,333')}
      ${poly('#5a5700','697,277 1212,333 1212,517 697,459')}
      ${poly('#4f4b20','697,277 1212,333 1212,385 697,330')}
      ${poly('#625f30','697,330 1212,385 1212,412 697,358')}
      ${poly('#2f2d00','1212,333 1310,262 1302,398 1212,517')}
      ${poly('#2b5f2b','1000,75 1050,17 1150,17 1115,88')}
      ${poly('#4b0096','1068,80 1098,50 1098,84')}
      ${poly('#348634','668,62 1300,128 1568,158 1568,420 1268,390 1268,262 668,190')}
      ${poly('#1b8a1b','690,40 1280,105 1568,136 1568,160 1290,130 668,62')}
      <path d="M668 62l622 68 278 30" stroke="#2bcc2b" fill="none"/>
      ${poly('#2b5f2b','1300,135 1420,17 1440,17 1420,100 1360,118')}
      ${poly('#2b5f2b','1110,388 1300,140 1300,235 1110,485')}
      ${poly('#1a7518','1110,410 1160,390 1200,372 1108,488')}
      ${poly('#1b8a1b','1062,385 1262,128 1345,17 1405,17 1110,388')}
      ${poly('#2bcc2b','1062,385 1108,390 1108,489 1062,484')}
      <g fill="#4b0096"><path d="${jagged(530,544,17,315,5)}"/><path d="${jagged(650,672,17,328,6)}"/><path d="M1000 17h12v68l-12 10zM1468 17h12v120l-12 12zM640 17h57v25l-40 50z"/></g>
      <g fill="#8000ff"><path d="M505 17h26v298h-26z"/><path d="M563 17h77l10 55h-84z"/><path d="${jagged(616,651,17,328,4)}"/>
        <path d="${jagged(954,1002,17,95,5)}"/><path d="${jagged(1420,1470,17,150,5)}"/><path d="${jagged(1518,1568,17,432,6)}"/></g>
      ${poly('#3c3900','505,632 1020,690 897,852 242,777 270,740 270,600')}
      ${poly('#5a5700','242,777 897,852 897,1033 242,960')}
      ${poly('#353200','897,852 1020,690 1020,875 897,1033')}
      <path class="red" d="M1010 232L630 735 22 1540"/>
      <path class="red" d="M505 720l1063 122"/>
      ${poly('#3a3500','195,993 375,928 505,905 552,908 635,1043 562,1072 218,1033')}
      ${poly('#3c3900','195,993 218,1033 218,1215 195,1178')}
      ${poly('#5a5700','218,1033 562,1072 562,1254 218,1215')}
      ${poly('#4b4800','562,1072 635,1043 635,1227 562,1254')}
      ${poly('#0e4412','505,975 1568,1097 1568,1124 620,1015 495,1000')}
      ${poly('#38700f','505,975 905,1022 900,1036 495,988')}
      ${poly('#166716','620,1012 1568,1124 1568,1253 638,1148 635,1043')}
      ${poly('#8000ff','370,700 473,700 473,1017 370,1005')}
      ${poly('#4b0096','473,700 505,700 505,975 473,1017')}
      ${poly('#4b4800','22,890 38,910 38,1097 22,1093')}
      ${poly('#2bcc2b','22,262 30,262 30,410 22,410')}
      ${poly('#2f2fff','22,560 30,560 30,615 22,615')}
      <path class="red" d="M22 937l348 40M495 991l1073 124M22 1235l1508 173M22 1425l1038 118M420 1015l-180 240-145 185M1568 1358l-140 185"/>
      <path class="axis" d="M1530 1408l38 5M22 1535l80 8M110 1430l-88 110M1120 88l20-20M1180 40l360 10"/>`;
  }

  right(){
    let bars = '';
    for(let x=140;x<256;x+=9) bars += `M${x} ${230+(x*37)%130}V470`;
    let foot = '';
    for(let x=145;x<250;x+=14) foot += `M${x} 1160V1310l-22 ${8+(x%5)*5}M${x+6} 1165V1320l-6 25`;
    return `
      ${poly('#202020','0,17 490,17 440,100 440,200 0,140')}
      ${poly('#3333ff','0,17 225,17 185,70 0,45')}
      ${poly('#348634','0,150 315,190 337,225 337,260 250,380 240,450 0,425')}
      ${poly('#1b8a1b','0,140 315,178 315,202 0,165')}
      ${poly('#2f2f2f','0,428 135,442 135,470 0,458')}
      <path d="${jagged(12,28,17,432,6)}" fill="#4b0096"/>
      ${poly('#8000ff','0,17 14,17 14,434 0,432')}
      ${poly('#2bcc2b','337,250 440,345 540,358 500,415 500,485 250,455 240,410')}
      ${poly('#2d7a2d','315,225 337,225 337,255 240,400 240,330')}
      ${poly('#2bcc2b','470,42 505,17 518,17 512,46')}
      <path d="M445 17h35l-5 22h-30z" fill="#8000ff"/>
      <path class="axis" d="M440 105l250 31M440 216l250 30M812 152l60 7 30-6M842 162l34-8M948 50l-18 28-118 170M808 258l22-2M30 55l100 14M340 88l30 4"/>
      ${poly('#3c3900','612,253 1000,300 886,462 500,415 555,335')}
      ${poly('#5a5700','500,415 886,462 886,645 500,597')}
      ${poly('#353200','886,462 1000,300 1000,485 886,645')}
      ${poly('#1b8a1b','440,320 700,352 690,378 440,345')}
      ${poly('#187518','440,790 690,445 690,575 505,835 485,803')}
      ${poly('#1b8a1b','440,705 677,372 735,376 440,800')}
      <path class="red" d="M440 325l250 32M720 378L440 772"/>
      ${poly('#8000ff','687,17 785,17 785,383 687,372')}
      ${poly('#4b0096','785,17 812,17 812,347 785,383')}
      ${poly('#3c3900','240,858 315,825 440,798 490,803 563,940 493,968 240,940')}
      ${poly('#5a5700','240,938 493,968 493,1150 240,1120')}
      ${poly('#4b4800','493,968 563,940 563,1122 493,1150')}
      ${poly('#3d6310','240,985 305,900 362,907 332,955 332,1088 250,1200 240,1200')}
      ${poly('#2d7a14','240,1010 312,905 345,905 240,1055')}
      ${poly('#8000ff','315,17 412,17 412,913 315,901')}
      ${poly('#4b0096','412,17 440,17 440,875 412,913')}
      ${poly('#262200','-30,1148 130,1085 300,1058 382,1198 312,1225 -6,1187')}
      ${poly('#2b2700','-30,1148 -6,1187 -6,1368 -30,1330')}
      ${poly('#332e00','-6,1187 312,1225 312,1407 -6,1368')}
      ${poly('#282400','312,1225 382,1198 382,1380 312,1407')}
      ${poly('#1d5010','-26,1122 200,1148 145,1203 -6,1187')}
      ${poly('#3b5f0a','-6,1187 145,1203 145,1270 -6,1253')}
      <path class="red" d="M0 840l315 38M0 1112l160 20M345 905L0 1397"/>
      <path class="axis" d="M795 370l660 85M970 393L160 1543M1215 423L425 1543M425 893l663 82M250 1143l662 82M0 1408l720 89M955 380l30 26M958 396l30-6M1198 410l34 26M1200 426l30-6M588 902l30 24M590 917l28-6M410 1152l32 26M414 1168l28-6M218 1424l32 26M220 1440l30-6"/>
      <path d="M133 17h125v435l-28 38-97-10z" fill="#5a00b4" fill-opacity=".68"/>
      <path d="M230 17h28v435l-28 38z" fill="#2c0059" fill-opacity=".5"/>
      <path d="${bars}" stroke="#9e4cc8" fill="none"/>
      <path d="M133 480l97 10v680l-97-12z" fill="#58504c" fill-opacity=".4"/>
      <path d="M133 480l97 10v680l-97-12z" fill="url(#mesh)"/>
      <path d="M133 480h34v682l-34-4z" fill="#8f807a" fill-opacity=".45"/>
      <path d="M230 490l28-38v680l-28 38z" fill="#6b625c" fill-opacity=".6"/>
      <path d="M230 490l28-38v680l-28 38z" fill="url(#mesh)"/>
      <path d="${foot}M140 1205l90 12 22-20M140 1245l90 12 22-20M140 1290l90 10 22-18" stroke="#857b48" fill="none"/>
      <path d="M133 480l97 10 28-38v680l-28 38-97-12zM230 490v680" fill="none" stroke="#fff" stroke-width="2"/>
      <path d="M133 480l28-40 97 12" fill="none" stroke="#d9c7ee"/>`;
  }

  render(){
    const pins = [[899,178,'13'],[1403,178,'14'],[510,559,'C'],[510,601,'B'],[510,670,'A'],[510,694,'13'],[763,699,'A'],[1010,699,'14'],[1467,509,'E'],[1400,599,'D'],[1327,696,'B']];
    const dims = [[1129,208,6,'7500'],[1386,399,-54,'7700'],[1283,537,-54,'3700'],[1385,535,-54,'18000'],[1213,630,-54,'4000'],[1154,705,-54,'600']];
    const items = ['H边钢筋','B边钢筋','角筋','箍筋','插筋','上层柱插筋下插长度','显示其它图元','显示详细公式'];
    return `
    <svg class="scene" viewBox="498 166 1139 545" preserveAspectRatio="xMidYMid slice">
      <defs><pattern id="mesh" width="13" height="14" patternUnits="userSpaceOnUse"><path d="M0 2h13M0 9h10M2 0v14M6 0v11M10 3v11" stroke="#a8968e" stroke-width="2" fill="none"/></pattern></defs>
      <g transform="translate(490 160) scale(.3571)">${this.left()}</g>
      <g transform="translate(1040 160) scale(.3827 .3571)">${this.right()}</g>
      <g class="ring"><circle cx="1067" cy="439" r="256"/><circle cx="809" cy="439" r="30"/><circle cx="1324" cy="439" r="30"/><circle cx="1067" cy="182" r="30"/><circle cx="1067" cy="695" r="30"/></g>
      ${pins.map(p=>`<circle class="axis" cx="${p[0]}" cy="${p[1]}" r="12"/><text x="${p[0]}" y="${p[1]+6}">${p[2]}</text>`).join('')}
      <circle class="axis" cx="1605" cy="323" r="9"/>
      ${dims.map(d=>`<text transform="translate(${d[0]} ${d[1]}) rotate(${d[2]})" y="6">${d[3]}</text>`).join('')}
      <path d="M548 662V643" stroke="#00f" stroke-width="3"/><path d="M548 633l6 13h-12z" fill="#00f"/>
      <path d="M548 662l17 1" stroke="#f00" stroke-width="3"/><path d="M577 664l-13 6v-11z" fill="#f00"/>
      <circle cx="554" cy="655" r="5" fill="#0c0"/><path d="M543 658h8v8h-8z" fill="#ccc"/>
      <text x="548" y="633" style="fill:#00f;font-size:14px">Z</text><text x="558" y="651" style="fill:#0f0;font-size:14px">Y</text><text x="583" y="670" style="fill:#f00;font-size:15px">X</text>
    </svg>
    <div class="win"><h2>钢筋显示控制面板</h2><div class="box">${items.map(t=>`<label><input type="checkbox" checked>${t}</label>`).join('')}</div></div>
    <div class="tools">
      <button aria-label="动态观察"><ui-icon name="orbit"></ui-icon></button>
      <button aria-label="俯视"><ui-icon name="v2d"></ui-icon><small>2D</small></button>
      <button class="m" aria-label="线框"><ui-icon name="cubewire"></ui-icon></button><i class="caret"></i>
      <button class="m" aria-label="实体"><ui-icon name="cubesolid"></ui-icon></button><i class="caret"></i>
      <button class="m" aria-label="旋转"><ui-icon name="spin"></ui-icon></button><i class="caret"></i>
      <hr><button aria-label="显示设置"><ui-icon name="sheet"></ui-icon></button>
    </div>`;
  }
}

// ---- Rebar editor ----
const F1 = '3940/3+1100-50+max(6*d,<br>150)', F2 = '3940/3+1*max(35*d,<br>500)+1100-50+max(6*d,150)';
const D1 = '本层露出长度+基础厚度-保护层+计算<br>设置设定的弯折', D2 = '本层露出长度+错开距离+基础厚度-保<br>护层+计算设置设定的弯折';
const REBARS = [
  ['角筋插筋.1','2363',F1,D1,'2472',2,'4.944'],
  ['角筋插筋.2','2993',F2,D2,'3102',2,'6.204'],
  ['H边插筋.1','2993',F2,D2,'3102',4,'6.204'],
  ['H边插筋.2','2363',F1,D1,'2472',4,'4.944']
];

class RebarEditor extends BaseElement {
  css(){ return `
    :host{display:block;position:relative;background:#efefef}
    dock-panel{border-bottom:0;background:#efefef}
    .gap{padding:7px 9px 9px}
    .box{border:1px solid #bfc1c5;background:#fff}
    .bar{display:flex;align-items:center;height:28px;background:#efefef;padding-left:3px;color:#333;white-space:nowrap}
    .bar button{display:flex;align-items:center;gap:4px;margin-right:8px}
    .bar .n{width:18px;margin:0;justify-content:center;font-size:11px}
    .bar .n:disabled{color:#aaa}
    .bar .p{margin-left:3px}
    .bar .q{margin-left:0}
    .bar .menu{gap:4px;margin-right:7px}
    .bar .menu .caret{margin-left:4px}
    .view{display:flex;height:200px;background:#fff}
    .clip{flex:1;min-width:0;overflow:hidden}
    table{width:calc(100% + 20px);border-top:1px solid #c9cacd}
    td,th{border:solid #ccd0cc;border-width:0 1px 1px 0;white-space:nowrap;overflow:hidden;padding:0 3px;text-align:left}
    th{height:20px;background:#efefef;color:#333;text-align:center;padding:0}
    th div{height:20px;line-height:20px;overflow:hidden}
    th .w{display:grid;align-content:center;white-space:normal;line-height:14px}
    th.hot{background:#80bbfb;color:#fff;font-weight:700}
    td{height:46px;background:#ccffd9;font-family:"Liberation Serif","Noto Sans CJK SC",serif;line-height:14px;padding-bottom:5px}
    td:first-child{background:#efefef;padding:0;text-align:center;font-family:"Open Sans",sans-serif;color:#444}
    tr.on td:first-child{background:#80bbfb;color:#fff;font-weight:700}
    tr.on td:nth-child(2){box-shadow:inset -2px -2px #7b857e,inset 0 1px #7b857e}
    td:nth-child(4){padding:0 12px 0 0}
    td:nth-child(4) svg{display:block;margin:0 auto 0 5px;width:9px;height:11px;stroke:#111;fill:none}
    .shape{display:flex;align-items:center;gap:7px;padding:4px 0 0 11px;font-size:13px}
    .shape b{flex:1;height:18px;border:solid #000;border-width:0 0 2px 2px;font-weight:400;color:#f00;text-align:center;line-height:10px;padding-right:14px}
    .v{width:14px;padding:14px 3px}
    .v i{display:block;height:29px;border-radius:4px;background:#cbcbcb}
    .h{height:14px;padding:3px 0 0 14px}
    .h i{display:block;width:67%;height:8px;border-radius:4px;background:#cbcbcb}
    svg.ink{position:absolute;left:0;top:0;width:1139px;height:294px;fill:none;stroke:#f00;stroke-width:2;pointer-events:none;overflow:visible}`; }
  render(){
    const w = [14,72,56,36,33,0,166,213,38,39,49,61,61,70];
    const h = ['','筋号','直径(mm)','级别','图号','图形','计算公式','公式描述','弯曲调整','长度','根数','搭接','损耗(%)','单重(kg)'];
    const t = (i,x,c)=>`<button class="${c||''}"><ui-icon name="${i}"></ui-icon>${x}</button>`;
    const lvl = '<svg viewBox="0 0 9 11" role="img" aria-label="三级钢"><path d="M2 2.5h5l1.500 1v2l-1.500 1H2L.5 5.500v-2zM4.500 0v11M0 8.500h9"/></svg>';
    return `<dock-panel heading="编辑钢筋">
      <div class="gap"><div class="box">
        <div class="bar"><button class="n" disabled>|&lt;</button><button class="n" disabled>&lt;</button><button class="n">&gt;</button><button class="n">&gt;|</button>
          <button class="p" aria-label="上移"><ui-icon name="up"></ui-icon></button><button aria-label="下移" class="q"><ui-icon name="down"></ui-icon></button>
          ${t('insert','插入')}${t('deldoc','删除')}${t('taper','缩尺配筋')}${t('info','钢筋信息')}${t('lib','钢筋图库')}${t('other','其他<i class="caret"></i>','menu')}<span>单构件钢筋总重(kg)：339.055</span></div>
        <div class="view"><div class="clip"><table>
          <colgroup>${w.map(x=>`<col${x?` style="width:${x}px"`:''}>`).join('')}</colgroup>
          <tr>${h.map((x,i)=>`<th class="${i===1?'hot':''}"><div class="${i===8?'w':''}">${x}</div></th>`).join('')}</tr>
          ${REBARS.map((r,i)=>`<tr class="${i?'':'on'}"><td>${i+1}</td><td>${r[0]}</td><td>18</td><td>${lvl}</td><td>18</td><td><div class="shape">150<b>${r[1]}</b></div></td><td>${r[2]}</td><td>${r[3]}</td><td>41</td><td>${r[4]}</td><td>${r[5]}</td><td>0</td><td>0</td><td>${r[6]}</td></tr>`).join('')}
        </table></div><div class="v"><i></i></div></div>
        <div class="h"><i></i></div>
      </div></div>
    </dock-panel>
    <svg class="ink" viewBox="498 716 1139 294">
      <path d="M993 793L964 788C950 786 930 786 922 787L906 791 902 803C900 815 900 828 903 830 906 837 915 841 922 843L963 850C968 851 968 851 975 853L991 854 1026 858C1040 860 1050 861 1063 860 1078 859 1088 857 1094 853L1101 840 1102 827C1101 820 1098 814 1088 808 1078 802 1066 799 1040 793L1026 789 991 787"/>
      <path d="M1165 788C1140 788 1110 792 1101 794 1090 798 1080 803 1078 808 1074 820 1074 830 1075 837L1082 843 1096 852 1107 856 1151 856 1182 859C1220 861 1260 860 1315 858 1320 855 1319 846 1318 839V825L1315 819 1300 810 1281 799C1265 795 1240 793 1231 791L1193 783 1174 780H1165M1107 825C1120 823 1130 823 1136 823L1166 826 1182 828 1192 828"/>
    </svg>`;
  }
}

// ---- Display settings ----
// level, name, state: 1 checked, 0 clear, 2 mixed; second flag = name box disabled
const LAYERS = [
  [0,'所有构件',2],[1,'轴线',1,1],[2,'轴网',1,1],[2,'辅助轴线',1,1],[1,'柱',1],[2,'柱',1],[2,'构造柱',1],[2,'砌体柱',1],
  [1,'墙',2],[2,'剪力墙',0],[2,'人防门框墙',1],[2,'砌体墙',0],[2,'砌体加筋',0],[2,'保温墙',0],[2,'暗梁',0],[2,'墙垛',0],[2,'幕墙',0],
  [1,'门窗洞',0],[2,'门',0],[2,'窗',0],[2,'门联窗',0],[2,'墙洞',0],[2,'带形窗',0],[2,'带形洞',0],[2,'飘窗',0],[2,'老虎窗',0],[2,'过梁',0],[2,'壁龛',0],
  [1,'梁',1],[2,'梁',1],[2,'连梁',1],[2,'圈梁',1],[1,'板',2],[2,'现浇板',1],[2,'',1]
];

class DisplaySettings extends BaseElement {
  css(){ return `
    :host{display:flex;min-height:0;position:relative}
    dock-panel{flex:1}
    .tabs{display:flex;gap:4px;height:28px;flex:none;background:#efefef;border-bottom:1px solid #c9cacd;padding:3px 2px 0}
    .tabs button{width:75px;color:#555;background:#dedede;border-radius:3px 3px 0 0;margin-top:2px}
    .tabs .on{width:76px;margin:0 0 -1px;background:#fff;color:#2d7fe0;border:1px solid #c9cacd;border-bottom:0}
    .box{flex:1;min-height:0;overflow:hidden;margin:1px 2px 0;border:1px solid #bfc1c5;display:flex;align-items:flex-start}
    table{flex:1;min-width:0}
    th,td{height:21px;padding:0;border:solid #d3d3d3;border-width:0 1px 1px 0;line-height:18px;white-space:nowrap}
    th{background:#efefef;color:#333}
    th.hot{background:#80bbfb;color:#fff;font-weight:700}
    td input{margin:auto!important}
    td:first-child{padding-left:2px}
    .l0 td,.l1 td{line-height:16px}
    .l1 td:first-child{padding-left:12px;background:linear-gradient(#ddd,#ddd) 8px 0/1px 100% no-repeat}
    .l2 td:first-child{padding-left:41px;background:linear-gradient(#ddd,#ddd) 8px 0/1px 100% no-repeat,linear-gradient(#ddd,#ddd) 18px 0/1px 100% no-repeat,linear-gradient(#ddd,#ddd) 18px 9px/17px 1px no-repeat}
    .l2.end td:first-child{background-size:1px 100%,1px 10px,17px 1px}
    .l0 td:nth-child(2){box-shadow:inset 0 0 0 1px #808080}
    .scroll{width:15px;padding:14px 3px}
    .scroll i{display:block;height:206px;border-radius:4px;background:#cbcbcb}
    .foot{flex:none;display:flex;justify-content:flex-end;padding:6px 8px 5px;position:relative;z-index:2}
    .foot button{width:90px;height:27px;background:#fff;border:1px solid #c6c6c6;border-radius:3px}
    .meter{position:absolute;right:1px;top:260px;width:8px;height:57px;border-radius:4px;background:linear-gradient(#5a5a5a 30px,transparent 30px),repeating-linear-gradient(#2fc95c 0 1px,#5a5a5a 1px 2px);box-shadow:0 0 4px #0006}`; }
  render(){
    return `<dock-panel heading="显示设置">
      <div class="tabs" role="tablist"><button class="on" role="tab">图元显示</button><button role="tab">楼层显示</button></div>
      <div class="box"><table><colgroup><col><col style="width:63px"><col style="width:63px"></colgroup>
        <tr><th>图层构件</th><th class="hot">显示图元</th><th>显示名称</th></tr>
        ${LAYERS.map((r,i)=>{
          const end = r[0]===2 && LAYERS[i+1] && LAYERS[i+1][0]<2;
          return `<tr class="l${r[0]}${end?' end':''}"><td>${r[0]<2?'<span class="pm">−</span>':''}${r[1]}</td>
          <td><input type="checkbox" aria-label="显示图元 ${r[1]}"${r[2]===1?' checked':''}${r[2]===2?' data-mixed':''}></td>
          <td><input type="checkbox" aria-label="显示名称 ${r[1]}"${r[3]?' disabled':''}></td></tr>`;
        }).join('')}
      </table><div class="scroll"><i></i></div></div>
      <div class="foot"><button>恢复默认设置</button></div>
    </dock-panel><div class="meter"></div>`;
  }
  ready(s){ s.querySelectorAll('[data-mixed]').forEach(c=>{ c.indeterminate = true; }); }
}

// ---- Status bar ----
class StatusBar extends BaseElement {
  css(){ return `
    :host{display:flex;align-items:center;height:24px;padding:3px 36px 0 2px;background:#dedee0;color:#333;white-space:nowrap}
    span{height:16px;line-height:16px}
    .fps{margin-left:auto}
    button{height:24px;margin-right:3px;padding:0 5px;border:1px solid #a0a0a0;background:#cfcfd1;display:flex;align-items:center;gap:6px}
    button.on{border-color:#4f9efb;background:#fff}
    button.i{padding:0 4px}`; }
  render(){
    const c = (t,w)=>`<span style="width:${w}px">${t}</span>`;
    const b = (i,l,m,k)=>`<button class="i ${k||''}" aria-label="${l}"><ui-icon name="${i}"></ui-icon>${m?'<i class="caret"></i>':''}</button>`;
    return c('X = 1348446 Y = 160038 Z = 144',263)+c('层高：',40)+c('4.1',43)+c('标高：',41)+c('-4.1~0',93)+c('1(9)',102)+c('隐藏：',36)+c('0',67)
      +b('ortho','正交',0,'on')+b('snap','捕捉',1,'on')+b('cross','交点')+b('angle','角度',1)+b('plusbox','偏移',1)
      +'<button>跨图层选择</button><button>折线选择</button><span class="fps">125 FPS</span>';
  }
}

// ---- Shell ----
class AppShell extends BaseElement {
  css(){ return `
    :host{display:flex;flex-direction:column;height:100vh;position:relative;overflow:hidden}
    main{flex:1;min-height:0;display:grid;grid-template-columns:210px 4px 280px 4px minmax(0,1fr) 3px 280px;grid-template-rows:minmax(0,1fr);background:#fff}
    .mid,.center{display:flex;flex-direction:column;min-height:0;min-width:0}
    .mid{gap:3px}
    component-list,model-view{flex:1}
    .grip{display:grid;place-items:center}
    .grip i{background:#5d6673;width:100%;height:100px;display:block}
    .v{align-items:start;padding-top:223px}
    .h{height:5px;flex:none}
    .h i{width:100px;height:5px}
    .mark{position:absolute;left:calc(100% - 289px);bottom:43px;color:#9c9c9ccc;font-size:15px;line-height:21px;pointer-events:none;white-space:nowrap}
    .mark b{display:block;font-size:20px;line-height:26px;font-weight:400}`; }
  render(){ return `
    <app-titlebar></app-titlebar>
    <ribbon-bar></ribbon-bar>
    <context-bar></context-bar>
    <main>
      <nav-tree></nav-tree><div></div>
      <div class="mid"><component-list></component-list><property-panel></property-panel></div>
      <div class="grip v"><i></i></div>
      <div class="center"><model-view></model-view><div class="grip h"><i></i></div><rebar-editor></rebar-editor></div>
      <div class="grip v"><i></i></div>
      <display-settings></display-settings>
    </main>
    <status-bar></status-bar>
    <div class="mark"><b>激活 Windows</b>转到“设置”以激活 Windows。</div>`; }
}

customElements.define('ui-icon', UiIcon);
customElements.define('app-titlebar', AppTitlebar);
customElements.define('ribbon-group', RibbonGroup);
customElements.define('ribbon-button', RibbonButton);
customElements.define('ribbon-bar', RibbonBar);
customElements.define('context-bar', ContextBar);
customElements.define('dock-panel', DockPanel);
customElements.define('nav-tree', NavTree);
customElements.define('component-list', ComponentList);
customElements.define('property-panel', PropertyPanel);
customElements.define('model-view', ModelView);
customElements.define('rebar-editor', RebarEditor);
customElements.define('display-settings', DisplaySettings);
customElements.define('status-bar', StatusBar);
customElements.define('app-shell', AppShell);
</script>
</body>
</html>
